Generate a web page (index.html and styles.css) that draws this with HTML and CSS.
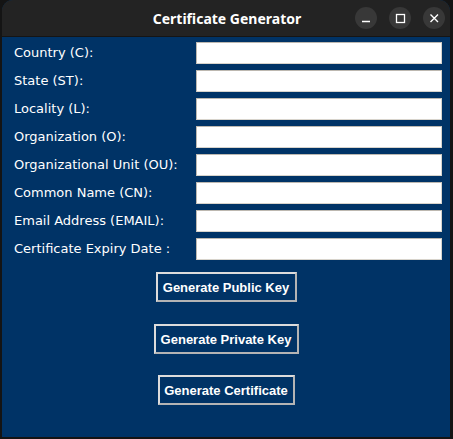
FILE: index.html
```html
<!DOCTYPE html>
<html>
<head>
<meta charset="utf-8">
<link rel="stylesheet" href="styles.css">
</head>
<body>
<div class="window">
  <div class="titlebar">
    <div class="title">Certificate Generator</div>
    <div class="controls">
      <span class="ctl"><svg width="22" height="22" viewBox="0 0 22 22"><line x1="7" y1="14.5" x2="15" y2="14.5" stroke="#fff" stroke-width="1.3"/></svg></span>
      <span class="ctl"><svg width="22" height="22" viewBox="0 0 22 22"><rect x="7.5" y="7.5" width="8" height="8" fill="none" stroke="#fff" stroke-width="1.3"/></svg></span>
      <span class="ctl"><svg width="22" height="22" viewBox="0 0 22 22"><path d="M7.5 7.5 L15 15 M15 7.5 L7.5 15" stroke="#fff" stroke-width="1.4"/></svg></span>
    </div>
  </div>
  <div class="content">
    <div class="form">
      <label class="lbl">Country (C):</label><input class="entry" type="text">
      <label class="lbl">State (ST):</label><input class="entry" type="text">
      <label class="lbl">Locality (L):</label><input class="entry" type="text">
      <label class="lbl">Organization (O):</label><input class="entry" type="text">
      <label class="lbl">Organizational Unit (OU):</label><input class="entry" type="text">
      <label class="lbl">Common Name (CN):</label><input class="entry" type="text">
      <label class="lbl">Email Address (EMAIL):</label><input class="entry" type="text">
      <label class="lbl">Certificate Expiry Date :</label><input class="entry" type="text">
    </div>
    <div class="buttons">
      <button class="btn btn-pub">Generate Public Key</button>
      <button class="btn btn-priv">Generate Private Key</button>
      <button class="btn btn-cert">Generate Certificate</button>
    </div>
  </div>
</div>
</body>
</html>
```
FILE: styles.css
```css
html, body {
  margin: 0;
  padding: 0;
  background: #141414;
  width: 453px;
  height: 439px;
  overflow: hidden;
}
.window {
  margin-left: 2px;
  width: 448px;
  height: 437px;
  border-radius: 11px 11px 0 0;
  overflow: hidden;
  background: #003366;
  display: flex;
  flex-direction: column;
}
.titlebar {
  height: 36px;
  background: #232323;
  border-bottom: 1px solid #151515;
  position: relative;
  display: flex;
  align-items: center;
  justify-content: center;
}
.title {
  font-family: "Noto Sans", "DejaVu Sans", sans-serif;
  font-weight: bold;
  font-size: 14px;
  color: #ffffff;
  margin-left: 2px;
}
.controls {
  position: absolute;
  right: 5px;
  top: 7px;
  display: flex;
  gap: 12px;
}
.ctl {
  width: 22px;
  height: 22px;
  border-radius: 50%;
  background: #383838;
  display: block;
}
.ctl svg { display: block; }
.content {
  padding: 5px 8px 0 12px;
}
.form {
  display: grid;
  grid-template-columns: 182px 246px;
  row-gap: 6px;
}
.lbl {
  font-family: "DejaVu Sans", sans-serif;
  font-size: 13px;
  color: #ffffff;
  line-height: 22px;
  white-space: nowrap;
}
.entry {
  box-sizing: border-box;
  width: 246px;
  height: 22px;
  margin: 0;
  padding: 0;
  background: #ffffff;
  border: 1px solid #bdb8b0;
  border-right-color: #d8d4cc;
  border-bottom-color: #d8d4cc;
  border-radius: 0;
  outline: none;
}
.buttons {
  display: flex;
  flex-direction: column;
  align-items: center;
  margin-left: -4px;
  padding-top: 12px;
}
.btn {
  box-sizing: border-box;
  height: 30px;
  background: #003366;
  color: #ffffff;
  font-family: "Liberation Sans", Arial, sans-serif;
  font-weight: bold;
  font-size: 13px;
  border: 2px solid #dcdcdc;
  border-right-color: #b4b4b4;
  border-bottom-color: #b4b4b4;
  border-radius: 0;
  padding: 0;
}
.btn-pub { width: 141px; }
.btn-priv { width: 145px; margin-top: 22px; }
.btn-cert { width: 137px; margin-top: 21px; }
```
